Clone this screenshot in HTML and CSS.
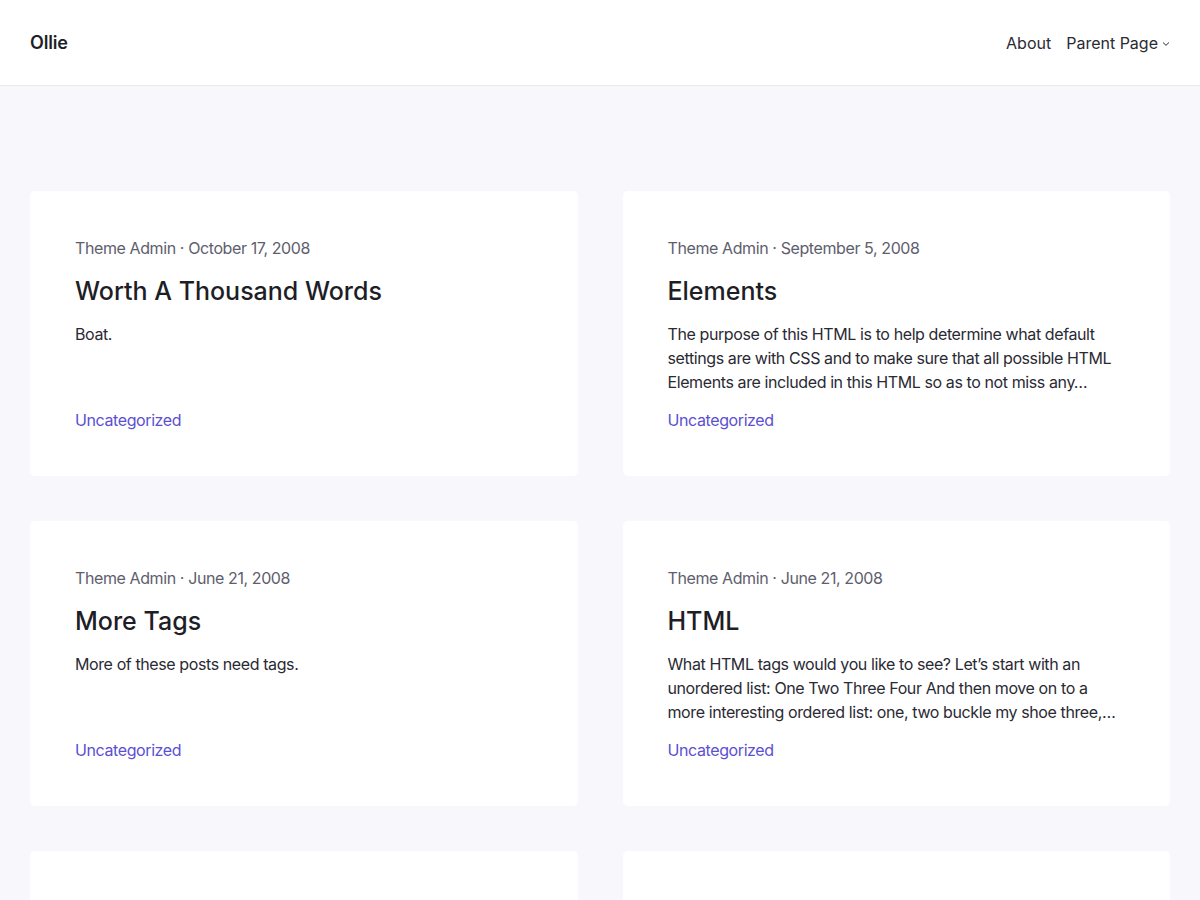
FILE: index.html
```html
<!DOCTYPE html>
<html lang="en">
<head>
<meta charset="utf-8">
<title>Ollie</title>
<link rel="stylesheet" href="styles.css">
</head>
<body>
<header class="site-header">
  <a class="site-title" href="#">Ollie</a>
  <nav class="site-nav">
    <a href="#">About</a>
    <a href="#" class="has-sub">Parent Page <svg class="chev" width="8" height="8" viewBox="0 0 12 12" aria-hidden="true"><path d="M2 4.2 L6 8 L10 4.2" fill="none" stroke="currentColor" stroke-width="1.5" stroke-linecap="round" stroke-linejoin="round"/></svg></a>
  </nav>
</header>
<main class="posts">
  <article class="card">
    <p class="meta">Theme Admin · October 17, 2008</p>
    <h2 class="title">Worth A Thousand Words</h2>
    <p class="excerpt">Boat.</p>
    <a class="cat" href="#">Uncategorized</a>
  </article>
  <article class="card">
    <p class="meta">Theme Admin · September 5, 2008</p>
    <h2 class="title">Elements</h2>
    <p class="excerpt">The purpose of this HTML is to help determine what default settings are with CSS and to make sure that all possible HTML Elements are included in this HTML so as to not miss any…</p>
    <a class="cat" href="#">Uncategorized</a>
  </article>
  <article class="card">
    <p class="meta">Theme Admin · June 21, 2008</p>
    <h2 class="title">More Tags</h2>
    <p class="excerpt">More of these posts need tags.</p>
    <a class="cat" href="#">Uncategorized</a>
  </article>
  <article class="card">
    <p class="meta">Theme Admin · June 21, 2008</p>
    <h2 class="title">HTML</h2>
    <p class="excerpt">What HTML tags would you like to see? Let’s start with an unordered list: One Two Three Four And then move on to a more interesting ordered list: one, two buckle my shoe three,…</p>
    <a class="cat" href="#">Uncategorized</a>
  </article>
  <article class="card card-empty" aria-hidden="true"></article>
  <article class="card card-empty" aria-hidden="true"></article>
</main>
</body>
</html>
```
FILE: styles.css
```css
* { box-sizing: border-box; }
html, body { margin: 0; padding: 0; }
body {
  background: #f8f8fc;
  color: #1e1e26;
  font-family: Inter, "Noto Sans", sans-serif;
  font-size: 16px;
  line-height: 1.5;
}
a { text-decoration: none; color: inherit; }

.site-header {
  height: 86px;
  background: #ffffff;
  border-bottom: 1px solid #e8e8f0;
  display: flex;
  align-items: center;
  justify-content: space-between;
  padding: 0 30px;
}
.site-title {
  font-size: 18px;
  font-weight: 600;
  color: #1e1e26;
  letter-spacing: -0.2px;
}
.site-nav {
  display: flex;
  gap: 15px;
  font-size: 16px;
  color: #2a2a33;
}
.site-nav a { display: flex; align-items: center; gap: 4px; }
.chev { margin-top: 2px; }

.posts {
  display: grid;
  grid-template-columns: 1fr 1fr;
  column-gap: 45px;
  row-gap: 45px;
  padding: 105px 30px 0;
}
.card {
  background: #ffffff;
  border-radius: 5px;
  padding: 45px 45px 44px;
  min-height: 285px;
  display: flex;
  flex-direction: column;
}
.meta {
  margin: 0;
  font-size: 16px;
  line-height: 24px;
  color: #5e5e6e;
  letter-spacing: -0.4px;
}
.title {
  margin: 15px 0 0;
  font-size: 25px;
  line-height: 32px;
  font-weight: 500;
  letter-spacing: 0;
  color: #1e1e26;
}
.excerpt {
  margin: 15px 0 0;
  font-size: 16px;
  line-height: 24px;
  color: #2a2a33;
  letter-spacing: -0.4px;
}
.cat {
  margin-top: auto;
  padding-top: 14px;
  font-size: 16px;
  line-height: 24px;
  color: #5b4fd2;
  letter-spacing: -0.4px;
}
```
